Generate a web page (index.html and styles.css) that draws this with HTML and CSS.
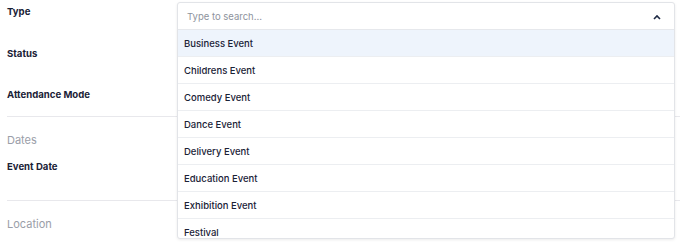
FILE: index.html
```html
<!DOCTYPE html>
<html>
<head>
<meta charset="utf-8">
<link rel="stylesheet" href="styles.css">
</head>
<body>
<div class="page">
  <div class="form">
    <div class="group">
      <div class="label">Type</div>
      <div class="label">Status</div>
      <div class="label">Attendance Mode</div>
    </div>
    <div class="section">
      <div class="heading">Dates</div>
      <div class="label first">Event Date</div>
    </div>
    <div class="section">
      <div class="heading">Location</div>
    </div>
  </div>
  <div class="dropdown">
    <div class="search">
      <span class="placeholder">Type to search...</span>
      <svg class="chevron" width="8" height="6" viewBox="0 0 8 6"><path d="M1 5 L4 2 L7 5" fill="none" stroke="#1e2a44" stroke-width="1.6"/></svg>
    </div>
    <ul class="options">
      <li class="option active">Business Event</li>
      <li class="option">Childrens Event</li>
      <li class="option">Comedy Event</li>
      <li class="option">Dance Event</li>
      <li class="option">Delivery Event</li>
      <li class="option">Education Event</li>
      <li class="option">Exhibition Event</li>
      <li class="option">Festival</li>
    </ul>
  </div>
</div>
</body>
</html>
```
FILE: styles.css
```css
html, body {
  margin: 0;
  padding: 0;
  background: #ffffff;
  font-family: Inter, "Noto Sans", "Liberation Sans", sans-serif;
  overflow: hidden;
}
.page {
  position: relative;
  width: 680px;
  height: 242px;
}
.form {
  padding: 2px 0 0 7px;
  width: 673px;
}
.group {
  display: flex;
  flex-direction: column;
  gap: 21.5px;
  padding-bottom: 11px;
}
.label {
  font-size: 9.6px;
  font-weight: 650;
  line-height: 20px;
  color: #1a2236;
}
.section {
  border-top: 1px solid #e8e8ec;
  padding-top: 13px;
  padding-bottom: 23px;
}
.heading {
  font-size: 11px;
  line-height: 20px;
  color: #9a9ea8;
}
.label.first {
  margin-top: 7px;
}
.dropdown {
  position: absolute;
  left: 177px;
  top: 2px;
  width: 496px;
  height: 235px;
  border: 1px solid #e2e4e8;
  border-radius: 3px;
  background: #ffffff;
  box-shadow: 0 1px 3px rgba(0,0,0,0.08);
  overflow: hidden;
}
.search {
  display: flex;
  align-items: center;
  justify-content: space-between;
  height: 27px;
  padding: 1px 13px 0 9px;
  box-sizing: border-box;
  border-bottom: 1px solid #e6e8ec;
}
.placeholder {
  font-size: 9.5px;
  color: #8e939d;
}
.chevron {
  display: block;
}
.options {
  list-style: none;
  margin: 0;
  padding: 0;
}
.option {
  height: 26px;
  line-height: 28px;
  padding-left: 6px;
  font-size: 9.5px;
  font-weight: 500;
  color: #1a2236;
  border-bottom: 1px solid #eceef1;
}
.option.active {
  background: #eef4fc;
}
```
